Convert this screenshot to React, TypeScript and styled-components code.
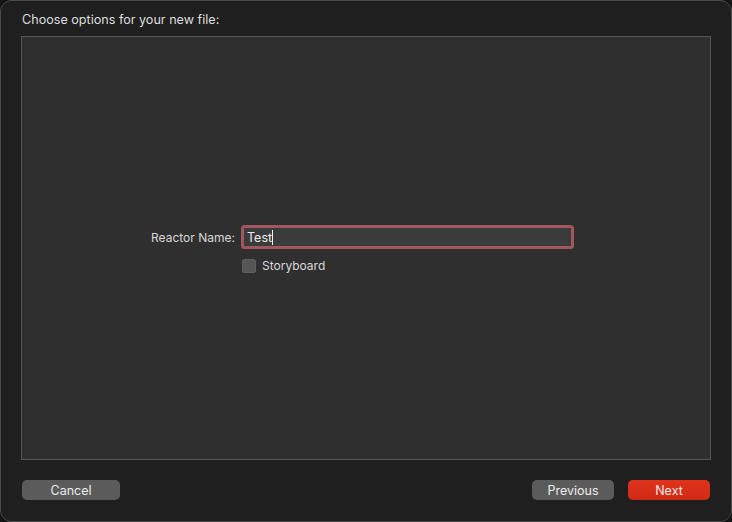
import React from "react";
import styled, { createGlobalStyle } from "styled-components";

const Global = createGlobalStyle`
  html, body { margin: 0; padding: 0; background: #161616; }
  body { font-family: Inter, "Liberation Sans", sans-serif; -webkit-font-smoothing: antialiased; }
`;

const Window = styled.div`
  box-sizing: border-box;
  width: 732px;
  height: 522px;
  background: #1f1f1f;
  border: 1px solid #4a4a4a;
  border-radius: 11px;
  box-shadow: 0 0 0 1px #0b0b0b;
  display: flex;
  flex-direction: column;
  padding: 0 20px 20px 20px;
`;

const Title = styled.div`
  height: 35px;
  display: flex;
  align-items: center;
  padding-left: 1px;
  padding-top: 1px;
  box-sizing: border-box;
  font-size: 12.6px;
  color: #dedede;
`;

const Panel = styled.div`
  box-sizing: border-box;
  height: 424px;
  background: #2f2f2f;
  border: 1px solid #555555;
  display: flex;
  flex-direction: column;
  padding: 188px 0 0 129px;
`;

const Form = styled.div`
  display: grid;
  grid-template-columns: 83px 333px;
  column-gap: 7px;
  row-gap: 9px;
  align-items: center;
`;

const Label = styled.label`
  font-size: 12px;
  color: #d8d8d8;
  text-align: right;
  white-space: nowrap;
`;

const Input = styled.div`
  box-sizing: border-box;
  height: 24px;
  background: #3b3b3b;
  border: 3px solid #a0585c;
  border-radius: 3.5px;
  display: flex;
  align-items: center;
  padding-left: 3px;
  font-size: 12.5px;
  color: #ececec;
`;

const Caret = styled.span`
  display: inline-block;
  width: 1px;
  height: 15px;
  background: #f2f2f2;
`;

const CheckRow = styled.div`
  grid-column: 2;
  display: flex;
  align-items: center;
  gap: 6px;
  padding-left: 1px;
  font-size: 12px;
  color: #d8d8d8;
`;

const Box = styled.span`
  width: 14px;
  height: 14px;
  border-radius: 3.5px;
  background: #565656;
  box-shadow: inset 0 0 0 0.5px #6a6a6a;
`;

const Footer = styled.div`
  display: flex;
  align-items: center;
  padding: 20px 1px 0 1px;
  gap: 14px;
`;

const Spacer = styled.div`
  flex: 1;
`;

const Button = styled.button<{ $primary?: boolean; $w: number }>`
  width: ${(p) => p.$w}px;
  height: 20px;
  border: none;
  border-radius: 5px;
  background: ${(p) => (p.$primary ? "linear-gradient(#e0331b, #cf2a16)" : "#5b5b5b")};
  color: #ececec;
  font-family: Inter, "Liberation Sans", sans-serif;
  font-size: 12.5px;
  padding: 0;
  display: flex;
  align-items: center;
  justify-content: center;
`;

export default function App() {
  return (
    <>
      <Global />
      <Window>
        <Title>Choose options for your new file:</Title>
        <Panel>
          <Form>
            <Label>Reactor Name:</Label>
            <Input>
              Test<Caret />
            </Input>
            <CheckRow>
              <Box />
              Storyboard
            </CheckRow>
          </Form>
        </Panel>
        <Footer>
          <Button $w={98}>Cancel</Button>
          <Spacer />
          <Button $w={82}>Previous</Button>
          <Button $w={82} $primary>
            Next
          </Button>
        </Footer>
      </Window>
    </>
  );
}
